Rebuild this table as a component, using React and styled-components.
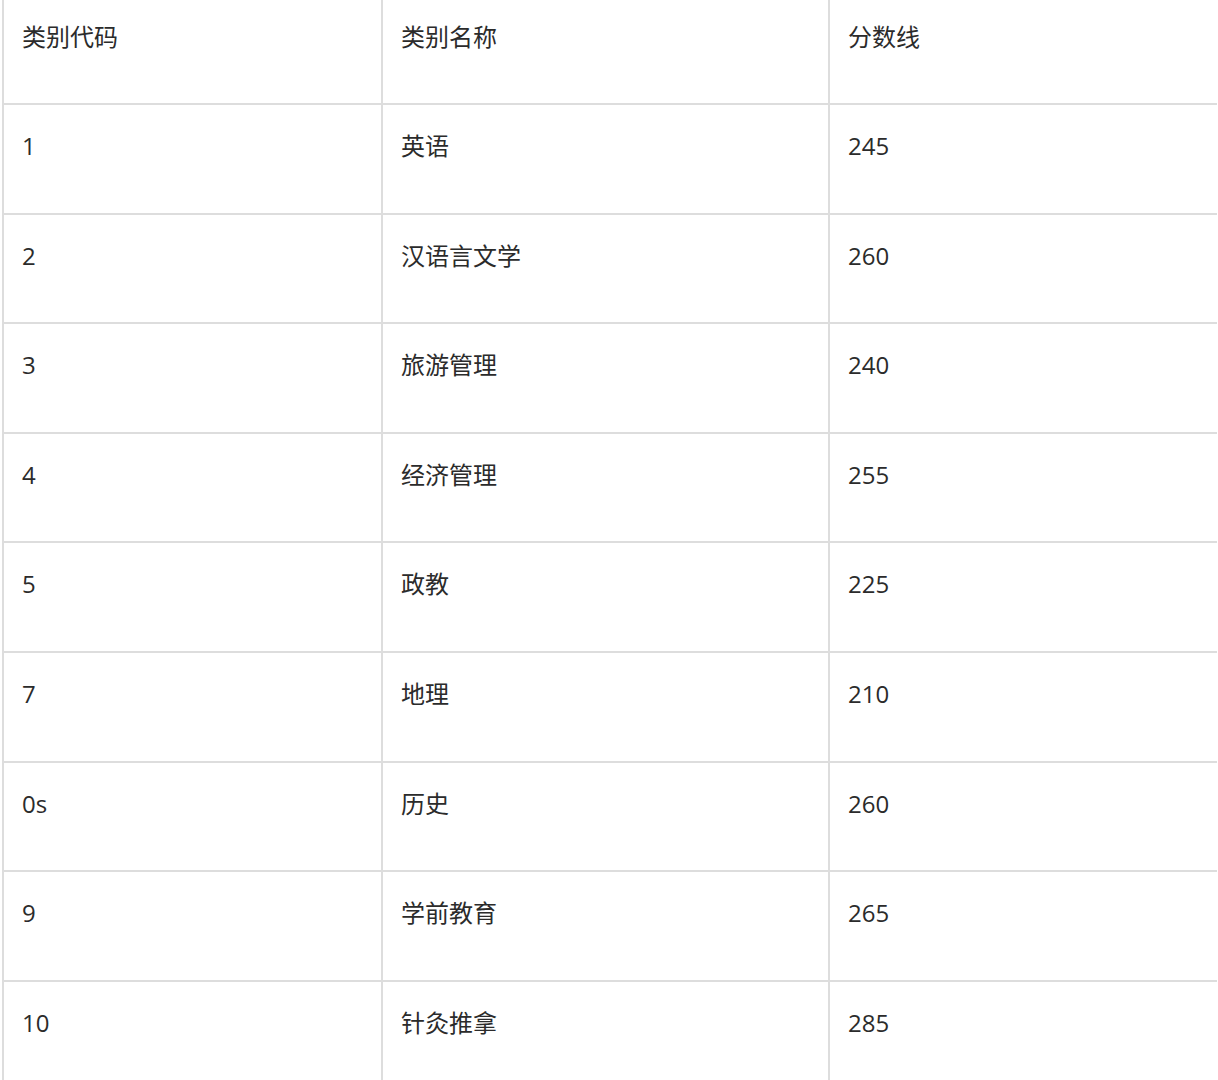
import React from "react";
import styled, { createGlobalStyle } from "styled-components";

const Global = createGlobalStyle`
  html, body {
    margin: 0;
    padding: 0;
    background: #ffffff;
    overflow: hidden;
  }
  body {
    font-family: "Open Sans", "Noto Sans CJK SC", sans-serif;
    color: #2b2b2b;
  }
`;

const Page = styled.div`
  padding-left: 2px;
  width: 1216px;
`;

const Table = styled.table`
  border-collapse: collapse;
  table-layout: fixed;
  width: 1214px;
  font-size: 24px;
  line-height: 32px;
`;

const Col = styled.col`
  width: ${(p) => p.$w}px;
`;

const HeadCell = styled.th`
  height: 104px;
  box-sizing: border-box;
  padding: 21px 18px 0 18px;
  text-align: left;
  vertical-align: top;
  font-weight: 400;
  border: 2px solid #dddddd;
  border-top: none;
  &:last-child {
    border-right: none;
  }
`;

const Row = styled.tr`
  height: 109.6px;
`;

const Cell = styled.td`
  box-sizing: border-box;
  padding: 25px 18px 0 18px;
  vertical-align: top;
  border: 2px solid #dddddd;
  &:last-child {
    border-right: none;
  }
`;

const rows = [
  ["1", "英语", "245"],
  ["2", "汉语言文学", "260"],
  ["3", "旅游管理", "240"],
  ["4", "经济管理", "255"],
  ["5", "政教", "225"],
  ["7", "地理", "210"],
  ["0s", "历史", "260"],
  ["9", "学前教育", "265"],
  ["10", "针灸推拿", "285"],
];

export default function App() {
  return (
    <>
      <Global />
      <Page>
        <Table>
          <colgroup>
            <Col $w={379} />
            <Col $w={447} />
            <Col $w={388} />
          </colgroup>
          <thead>
            <tr>
              <HeadCell>类别代码</HeadCell>
              <HeadCell>类别名称</HeadCell>
              <HeadCell>分数线</HeadCell>
            </tr>
          </thead>
          <tbody>
            {rows.map((r, i) => (
              <Row key={i}>
                {r.map((c, j) => (
                  <Cell key={j}>{c}</Cell>
                ))}
              </Row>
            ))}
          </tbody>
        </Table>
      </Page>
    </>
  );
}
